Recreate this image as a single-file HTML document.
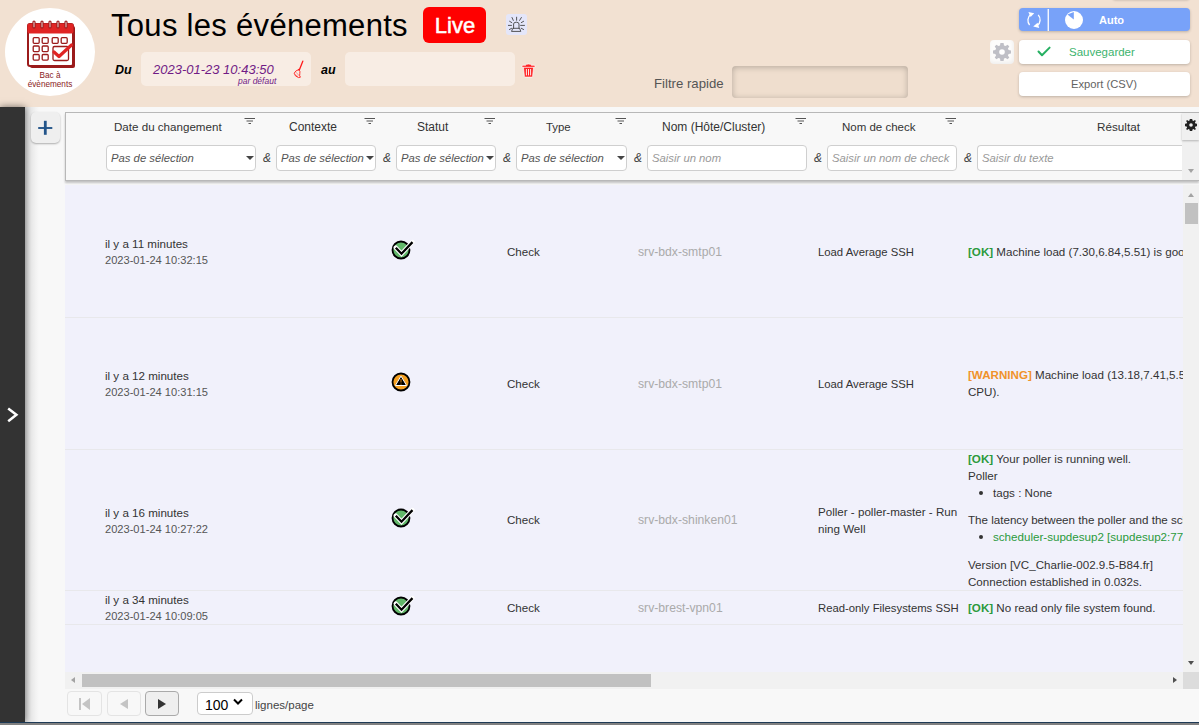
<!DOCTYPE html>
<html><head><meta charset="utf-8">
<style>
*{box-sizing:border-box;margin:0;padding:0}
html,body{width:1199px;height:725px;overflow:hidden;background:#f8f8f8;font-family:"Liberation Sans",sans-serif;position:relative}
.a{position:absolute;white-space:nowrap}
#hdr{left:0;top:0;width:1199px;height:107px;background:#f2e1d2}
#logo{left:5px;top:8px;width:90px;height:88px;border-radius:50%;background:#fff}
#title{left:111px;top:5.5px;font-size:31px;letter-spacing:0.3px;color:#000;line-height:40px}
#live{left:423px;top:7px;width:63px;height:36px;background:#f00;border-radius:6px;color:#fff;font-size:22px;line-height:36px;text-align:center;-webkit-text-stroke:0.5px #fff;padding-left:1px;padding-top:1px}
#siren{left:506px;top:14px;width:21px;height:21px;background:#e4e6fa;border-radius:3px}
.lbl{font-weight:bold;font-style:italic;font-size:12.5px;color:#000;line-height:16px}
.dinp{background:#f8ede4;border-radius:5px;height:34px;top:52px}
#qf{left:732px;top:66px;width:176px;height:32px;border-radius:4px;background:#efdece;box-shadow:inset 0 1px 6px rgba(0,0,0,.25)}
.btn{left:1019px;width:171px;height:24px;border-radius:4px;background:#fff;box-shadow:0 1px 3px rgba(0,0,0,.22)}
#sidebar{left:0;top:107px;width:25px;height:615px;background:#333;box-shadow:0 0 7px rgba(0,0,0,.55)}
#sbshadow{left:25px;top:107px;width:14px;height:615px;background:linear-gradient(to right,rgba(0,0,0,.1),rgba(0,0,0,0))}
#plus{left:31px;top:112px;width:29px;height:31px;background:#efefef;border-radius:5px;box-shadow:0 1px 2px rgba(0,0,0,.3)}
#thead{left:65px;top:112px;width:1134px;height:69px;background:#f8f8f8;border:1px solid #b8b8b8;border-right:none;box-shadow:0 2px 2px rgba(0,0,0,.22)}
#tbody{left:65px;top:185px;width:1118px;height:487px;background:#f1f1fb;overflow:hidden}
.th{font-size:12px;color:#333;line-height:16px;top:119px}
.sel{top:145px;height:26px;background:#fff;border:1px solid #cfcfcf;border-radius:4px;overflow:hidden}
.sel span{position:absolute;left:4px;top:4px;font-size:11.3px;font-style:italic;color:#555;line-height:16px;white-space:nowrap}
.sel span.ph{color:#999}
.amp{top:150px;font-size:12px;font-style:italic;color:#444;line-height:16px}
.tri{position:absolute;width:0;height:0;border-left:4px solid transparent;border-right:4px solid transparent;border-top:4px solid #444}
.sep{left:0;width:1118px;height:1px;background:#e8e8eb}
.t{font-size:11.6px;color:#333;line-height:16px}
.t2{font-size:11.1px;color:#555;line-height:16px}
.ok{color:#2b9a3c}
.warn{color:#f0932b}
.b{font-weight:bold}
</style></head><body>
<div id="hdr" class="a"></div>
<div id="logo" class="a"></div>
<svg class="a" style="left:0;top:0" width="100" height="100" viewBox="0 0 100 100">
<g stroke="#9b1b1b" fill="none" transform="translate(0.5,1.5)">
<rect x="29.5" y="24.5" width="45" height="42" rx="2" fill="#9b1b1b" stroke="none"/>
<rect x="27.5" y="22.5" width="45" height="42" rx="2" fill="#fff" stroke-width="2"/>
<rect x="27" y="22" width="46" height="10" rx="2" fill="#e02424" stroke="none"/>
<g fill="#fff" stroke-width="1.2">
<rect x="32.5" y="19.5" width="2" height="7" rx="1"/><rect x="40.5" y="19.5" width="2" height="7" rx="1"/><rect x="48.5" y="19.5" width="2" height="7" rx="1"/><rect x="56.5" y="19.5" width="2" height="7" rx="1"/><rect x="64.5" y="19.5" width="2" height="7" rx="1"/>
</g>
<g stroke-width="1.3">
<rect x="32.7" y="36.2" width="6" height="5.6" rx="1"/><rect x="41.7" y="36.2" width="6" height="5.6" rx="1"/><rect x="51.7" y="36.2" width="6" height="5.6" rx="1"/><rect x="60.7" y="36.2" width="6" height="5.6" rx="1"/>
<rect x="32.7" y="44.5" width="6" height="5.6" rx="1"/><rect x="41.7" y="44.5" width="6" height="5.6" rx="1"/>
<rect x="32.7" y="53" width="6" height="5.6" rx="1"/><rect x="41.7" y="53" width="6" height="5.6" rx="1"/>
<rect x="52.5" y="45" width="15.5" height="14" rx="1.5"/>
</g>
<path d="M53.5 50.5 L58.5 55 L71 43.5" stroke="#e02424" stroke-width="3.2" stroke-linecap="round" stroke-linejoin="round"/>
</g>
<text x="50" y="78" text-anchor="middle" font-family="Liberation Sans" font-size="8.2" fill="#8a1c1c">Bac à</text>
<text x="50" y="86.5" text-anchor="middle" font-family="Liberation Sans" font-size="8.2" fill="#8a1c1c">évènements</text>
</svg>
<div id="title" class="a">Tous les événements</div>
<div id="live" class="a">Live</div>
<div id="siren" class="a"></div>
<svg class="a" style="left:506px;top:14px" width="21" height="21" viewBox="506 14 21 21">
<g stroke="#3a3a3a" stroke-width="0.85" fill="none" stroke-linecap="round">
<path d="M516.6 17.2 V20.3 M512 17.5 L513.3 20.4 M521.4 17.5 L519.6 20.4 M509.6 21.3 L511.8 22.6 M523.6 21.3 L521.3 22.6 M508.4 25.4 H511.5 M520.6 25.4 H524.5 M509.4 29.5 L511.6 28.3 M523.6 29.5 L521.3 28.3"/>
<path d="M513.6 28.3 V24 Q513.6 22.2 516.3 22.2 Q519 22.2 519 24 V28.3"/>
<path d="M513.2 28.3 H519.6 L520.8 31.4 H511.9 Z" stroke-linejoin="round"/>
</g></svg>
<div class="a lbl" style="left:115px;top:62px">Du</div>
<div class="a dinp" style="left:141px;width:170px"></div>
<div class="a" style="left:153px;top:61.5px;font-size:13px;font-style:italic;color:#711b86;line-height:16px">2023-01-23 10:43:50</div>
<div class="a" style="left:238px;top:75.5px;font-size:8.5px;font-style:italic;color:#711b86;line-height:10px">par défaut</div>
<svg class="a" style="left:290px;top:58px" width="16" height="24" viewBox="290 58 16 24">
<g stroke="#ff1a1a" stroke-width="0.9" fill="none" stroke-linecap="round" stroke-linejoin="round">
<path d="M302.8 61.2 L299.3 70" stroke-width="1.3"/>
<path d="M298.6 69.6 Q295.2 70.6 294.2 73.2 Q294.6 76.4 298.6 77.6 L300.4 77.2 Q299.2 75.8 299.8 73.6 Q300.8 71.6 298.6 69.6 Z"/><path d="M296.4 72.6 L299 75.6 M295.6 74.8 L297.6 76.4" stroke-width="0.6" opacity="0.7"/>
</g></svg>
<svg class="a" style="left:520px;top:61px" width="18" height="19" viewBox="520 61 18 19">
<g fill="#f22" stroke="#fff" stroke-width="0.7">
<path d="M523.4 66.8 H533.6 L532.6 76.6 Q532.5 77.1 532 77.1 H525 Q524.5 77.1 524.4 76.6 Z"/>
<path d="M522 67.3 H535 V65.9 Q535 65.2 534 65.2 H531.4 Q531 64 528.5 64 Q526 64 525.6 65.2 H523 Q522 65.2 522 65.9 Z"/>
</g>
<g stroke="#fff" stroke-width="0.9"><path d="M526.4 69 V75.4 M528.5 69 V75.4 M530.6 69 V75.4"/></g>
</svg>
<div class="a lbl" style="left:321px;top:62px">au</div>
<div class="a dinp" style="left:345px;width:170px"></div>
<div class="a" style="left:654px;top:76px;font-size:13.2px;color:#555;line-height:16px">Filtre rapide</div>
<div id="qf" class="a"></div>
<div class="a" style="left:1112px;top:-10px;width:78px;height:10px;border-radius:4px;background:#f2e1d2;box-shadow:0 1px 2px rgba(0,0,0,.12)"></div>
<div class="a btn" style="top:8px;background:#78a2f9;height:23px"></div>
<svg class="a" style="left:1019px;top:8px" width="171" height="24" viewBox="1019 8 171 24">
<g stroke="#fff" fill="none" stroke-width="1.3">
<path d="M1029.6 25 A7.4 7.4 0 0 1 1030.6 14.6"/>
<path d="M1038.2 14.9 A7.4 7.4 0 0 1 1037.4 25.6"/>
</g>
<path d="M1028.4 12 L1034.2 13.2 L1030.6 17 Z" fill="#fff"/>
<path d="M1037.6 22.8 L1039.2 28 L1033.2 26.4 Z" fill="#fff"/>
<rect x="1047.6" y="9" width="1.3" height="22" fill="#fff"/>
<circle cx="1074" cy="20" r="9" fill="#fff"/>
<path d="M1073.8 19.4 L1073.8 12 L1067.4 14.6 Z" fill="#78a2f9"/>
</svg>
<div class="a" style="left:1099px;top:13px;font-size:11px;font-weight:bold;color:#fff;line-height:14px">Auto</div>
<div class="a btn" style="top:40px"></div>
<svg class="a" style="left:1035px;top:44px" width="18" height="16" viewBox="1035 44 18 16">
<path d="M1038.5 51.5 L1042 55.3 L1049.6 47.6" stroke="#26b062" stroke-width="2" fill="none" stroke-linecap="round" stroke-linejoin="round"/>
</svg>
<div class="a" style="left:1069px;top:45px;font-size:11.5px;color:#3db36e;line-height:14px">Sauvegarder</div>
<div class="a btn" style="top:72px"></div>
<div class="a" style="left:1071px;top:77px;font-size:11.2px;color:#626262;line-height:14px">Export (CSV)</div>
<div class="a" style="left:990px;top:40px;width:24px;height:24px;border-radius:4px;background:#fdfcfb;box-shadow:inset -1px -2px 4px rgba(0,0,0,.06)"></div>
<svg class="a" style="left:990px;top:40px" width="24" height="24" viewBox="-12 -12 24 24">
<g fill="#bfbfc6">
<path d="M-1.6 -9 H1.6 L2 -6.6 L3.6 -5.9 L5.6 -7.3 L7.3 -5.6 L5.9 -3.6 L6.6 -2 L9 -1.6 V1.6 L6.6 2 L5.9 3.6 L7.3 5.6 L5.6 7.3 L3.6 5.9 L2 6.6 L1.6 9 H-1.6 L-2 6.6 L-3.6 5.9 L-5.6 7.3 L-7.3 5.6 L-5.9 3.6 L-6.6 2 L-9 1.6 V-1.6 L-6.6 -2 L-5.9 -3.6 L-7.3 -5.6 L-5.6 -7.3 L-3.6 -5.9 L-2 -6.6 Z"/>
</g>
<circle r="2.8" fill="#fff"/>
</svg>

<div id="sidebar" class="a"></div>
<div id="sbshadow" class="a"></div>
<div id="plus" class="a"></div>
<svg class="a" style="left:31px;top:112px" width="29" height="31" viewBox="31 112 29 31">
<path d="M45.3 120.8 V134.8" stroke="#23558a" stroke-width="2.8" fill="none"/><path d="M38.2 128 H52.3" stroke="#23558a" stroke-width="1.9" fill="none"/>
</svg>
<svg class="a" style="left:0;top:400px" width="25" height="30" viewBox="0 400 25 30">
<path d="M8.2 408.4 L16.4 414.8 L8.2 421.2" stroke="#fff" stroke-width="2.5" fill="none"/>
</svg>
<div id="thead" class="a"></div>
<div class="a th" style="left:114px;font-size:11.6px">Date du changement</div>
<div class="a th" style="left:289px">Contexte</div>
<div class="a th" style="left:417px">Statut</div>
<div class="a th" style="left:546px;font-size:11.4px">Type</div>
<div class="a th" style="left:662px">Nom (Hôte/Cluster)</div>
<div class="a th" style="left:842px;font-size:11.5px">Nom de check</div>
<div class="a th" style="left:1097px;font-size:11.7px">Résultat</div>

<div class="a sel" style="left:106px;width:150px"><span>Pas de sélection</span><i class="tri" style="left:139px;top:10px"></i></div>
<div class="a amp" style="left:263px">&amp;</div>
<div class="a sel" style="left:276px;width:100px"><span>Pas de sélection</span><i class="tri" style="left:89px;top:10px"></i></div>
<div class="a amp" style="left:383px">&amp;</div>
<div class="a sel" style="left:396px;width:100px"><span>Pas de sélection</span><i class="tri" style="left:89px;top:10px"></i></div>
<div class="a amp" style="left:503px">&amp;</div>
<div class="a sel" style="left:516px;width:111px"><span>Pas de sélection</span><i class="tri" style="left:100px;top:10px"></i></div>
<div class="a amp" style="left:634px">&amp;</div>
<div class="a sel" style="left:647px;width:160px"><span class="ph">Saisir un nom</span></div>
<div class="a amp" style="left:814px">&amp;</div>
<div class="a sel" style="left:827px;width:130px"><span class="ph">Saisir un nom de check</span></div>
<div class="a amp" style="left:964px">&amp;</div>
<div class="a sel" style="left:977px;width:220px;border-right:none;border-radius:4px 0 0 4px"><span class="ph">Saisir du texte</span></div>
<div class="a" style="left:1182px;top:113px;width:17px;height:67px;background:#f0f0f0"></div>
<svg class="a" style="left:244px;top:117px" width="12" height="8" viewBox="0 0 12 8"><path d="M0.5 1.5 H11 M2.5 4 H9 M4.5 6.5 H7" stroke="#555" stroke-width="1" fill="none"/></svg>
<svg class="a" style="left:364px;top:117px" width="12" height="8" viewBox="0 0 12 8"><path d="M0.5 1.5 H11 M2.5 4 H9 M4.5 6.5 H7" stroke="#555" stroke-width="1" fill="none"/></svg>
<svg class="a" style="left:484px;top:117px" width="12" height="8" viewBox="0 0 12 8"><path d="M0.5 1.5 H11 M2.5 4 H9 M4.5 6.5 H7" stroke="#555" stroke-width="1" fill="none"/></svg>
<svg class="a" style="left:615px;top:117px" width="12" height="8" viewBox="0 0 12 8"><path d="M0.5 1.5 H11 M2.5 4 H9 M4.5 6.5 H7" stroke="#555" stroke-width="1" fill="none"/></svg>
<svg class="a" style="left:795px;top:117px" width="12" height="8" viewBox="0 0 12 8"><path d="M0.5 1.5 H11 M2.5 4 H9 M4.5 6.5 H7" stroke="#555" stroke-width="1" fill="none"/></svg>
<svg class="a" style="left:945px;top:117px" width="12" height="8" viewBox="0 0 12 8"><path d="M0.5 1.5 H11 M2.5 4 H9 M4.5 6.5 H7" stroke="#555" stroke-width="1" fill="none"/></svg>
<div class="a" style="left:1182px;top:113px;width:17px;height:27px;background:#f0f0f0;box-shadow:0 1px 2px rgba(0,0,0,.25)"></div>
<svg class="a" style="left:1183px;top:117px" width="16" height="16" viewBox="-8 -8 16 16">
<path d="M-1.2 -6 H1.2 L1.5 -4.4 L2.5 -3.9 L3.9 -4.9 L4.9 -3.9 L3.9 -2.5 L4.4 -1.5 L6 -1.2 V1.2 L4.4 1.5 L3.9 2.5 L4.9 3.9 L3.9 4.9 L2.5 3.9 L1.5 4.4 L1.2 6 H-1.2 L-1.5 4.4 L-2.5 3.9 L-3.9 4.9 L-4.9 3.9 L-3.9 2.5 L-4.4 1.5 L-6 1.2 V-1.2 L-4.4 -1.5 L-3.9 -2.5 L-4.9 -3.9 L-3.9 -4.9 L-2.5 -3.9 L-1.5 -4.4 Z" fill="#222"/>
<circle r="1.8" fill="#f0f0f0"/>
</svg>
<div class="a tri" style="left:1188px;top:169px;border-top-color:#a3a3a3;border-left-width:3.5px;border-right-width:3.5px"></div>

<div id="tbody" class="a">
  <div class="a sep" style="top:132px"></div>
  <div class="a sep" style="top:264px"></div>
  <div class="a sep" style="top:405px"></div>
  <div class="a sep" style="top:439px"></div>
</div>
<div class="a" style="left:1183px;top:185px;width:16px;height:487px;background:#f1f1f1"></div>
<div class="a" style="left:1185px;top:203px;width:13px;height:21px;background:#c1c1c1"></div>
<div class="a" style="left:65px;top:672px;width:1118px;height:17px;background:#f1f1f1"></div>
<div class="a" style="left:82px;top:674px;width:569px;height:13px;background:#c1c1c1"></div>
<div class="a" style="left:1188px;top:193px;width:0;height:0;border-left:3.5px solid transparent;border-right:3.5px solid transparent;border-bottom:4px solid #a3a3a3"></div>
<div class="a" style="left:1188px;top:661px;width:0;height:0;border-left:3.6px solid transparent;border-right:3.6px solid transparent;border-top:4px solid #505050"></div>
<div class="a" style="left:71px;top:677px;width:0;height:0;border-top:3.7px solid transparent;border-bottom:3.7px solid transparent;border-right:4.2px solid #a3a3a3"></div>
<div class="a" style="left:1173px;top:677px;width:0;height:0;border-top:3.7px solid transparent;border-bottom:3.7px solid transparent;border-left:4.2px solid #505050"></div>
<div class="a" style="left:1183px;top:672px;width:16px;height:17px;background:#dcdcdc"></div>

<!-- rows text -->
<svg class="a" style="left:388px;top:237.5px" width="28" height="24" viewBox="388 237.5 28 24">
<circle cx="401" cy="249.5" r="8.5" fill="#62b86a" stroke="#000" stroke-width="1.8"/>
<path d="M395.8 247.2 L401.5 253.2 L412.5 241.6" stroke="#fff" stroke-width="4.4" fill="none" stroke-linecap="round" stroke-linejoin="miter"/>
<path d="M395.8 247.2 L401.5 253.2 L412.5 241.6" stroke="#000" stroke-width="2.3" fill="none" stroke-linecap="butt" stroke-linejoin="miter"/>
</svg><svg class="a" style="left:388px;top:369.5px" width="28" height="24" viewBox="388 369.5 28 24">
<circle cx="401" cy="381.5" r="8.5" fill="#f5a020" stroke="#000" stroke-width="1.8"/>
<path d="M401 375.6 L406.6 385 H395.4 Z" fill="#000" stroke="#fff" stroke-width="1" stroke-linejoin="round"/>
<path d="M401 378.5 V382.1" stroke="#b87010" stroke-width="1.2"/>
<rect x="400.4" y="383.1" width="1.2" height="1" fill="#b87010"/>
</svg><svg class="a" style="left:388px;top:505.5px" width="28" height="24" viewBox="388 505.5 28 24">
<circle cx="401" cy="517.5" r="8.5" fill="#62b86a" stroke="#000" stroke-width="1.8"/>
<path d="M395.8 515.2 L401.5 521.2 L412.5 509.6" stroke="#fff" stroke-width="4.4" fill="none" stroke-linecap="round" stroke-linejoin="miter"/>
<path d="M395.8 515.2 L401.5 521.2 L412.5 509.6" stroke="#000" stroke-width="2.3" fill="none" stroke-linecap="butt" stroke-linejoin="miter"/>
</svg><svg class="a" style="left:388px;top:593.5px" width="28" height="24" viewBox="388 593.5 28 24">
<circle cx="401" cy="605.5" r="8.5" fill="#62b86a" stroke="#000" stroke-width="1.8"/>
<path d="M395.8 603.2 L401.5 609.2 L412.5 597.6" stroke="#fff" stroke-width="4.4" fill="none" stroke-linecap="round" stroke-linejoin="miter"/>
<path d="M395.8 603.2 L401.5 609.2 L412.5 597.6" stroke="#000" stroke-width="2.3" fill="none" stroke-linecap="butt" stroke-linejoin="miter"/>
</svg>
<div class="a" style="left:0;top:0;width:1183px;height:672px;overflow:hidden">
<div class="a t" style="left:105px;top:236px">il y a 11 minutes</div>
<div class="a t2" style="left:105px;top:252px">2023-01-24 10:32:15</div>
<div class="a t" style="left:507px;top:244px">Check</div>
<div class="a t" style="left:638px;top:244px;color:#aaa;font-size:12.2px">srv-bdx-smtp01</div>
<div class="a t" style="left:818px;top:244px;font-size:11.3px">Load Average SSH</div>
<div class="a t" style="left:968px;top:244px"><span class="ok b">[OK]</span> Machine load (7.30,6.84,5.51) is good</div>

<div class="a t" style="left:105px;top:368px">il y a 12 minutes</div>
<div class="a t2" style="left:105px;top:384px">2023-01-24 10:31:15</div>
<div class="a t" style="left:507px;top:376px">Check</div>
<div class="a t" style="left:638px;top:376px;color:#aaa;font-size:12.2px">srv-bdx-smtp01</div>
<div class="a t" style="left:818px;top:376px;font-size:11.3px">Load Average SSH</div>
<div class="a t" style="left:968px;top:366px;line-height:17px"><span class="warn b">[WARNING]</span> Machine load (13.18,7.41,5.51) is high (&gt; 2 per<br>CPU).</div>

<div class="a t" style="left:105px;top:505px">il y a 16 minutes</div>
<div class="a t2" style="left:105px;top:521px">2023-01-24 10:27:22</div>
<div class="a t" style="left:507px;top:512px">Check</div>
<div class="a t" style="left:638px;top:512px;color:#aaa;font-size:12.2px">srv-bdx-shinken01</div>
<div class="a t" style="left:818px;top:503px;line-height:17px">Poller - poller-master - Run<br>ning Well</div>
<div class="a t" style="left:968px;top:450px;line-height:17px"><span class="ok b">[OK]</span> Your poller is running well.<br>Poller</div>
<div class="a" style="left:979px;top:491px;width:4px;height:4px;border-radius:50%;background:#333"></div>
<div class="a t" style="left:993px;top:484px;line-height:17px">tags : None</div>
<div class="a t" style="left:968px;top:511px;line-height:17px">The latency between the poller and the scheduler</div>
<div class="a" style="left:979px;top:535px;width:4px;height:4px;border-radius:50%;background:#333"></div>
<div class="a t ok" style="left:993px;top:528px;line-height:17px">scheduler-supdesup2 [supdesup2:7768]</div>
<div class="a t" style="left:968px;top:556px;line-height:17px">Version [VC_Charlie-002.9.5-B84.fr]<br>Connection established in 0.032s.</div>

<div class="a t" style="left:105px;top:592px">il y a 34 minutes</div>
<div class="a t2" style="left:105px;top:608px">2023-01-24 10:09:05</div>
<div class="a t" style="left:507px;top:600px">Check</div>
<div class="a t" style="left:638px;top:600px;color:#aaa;font-size:12.2px">srv-brest-vpn01</div>
<div class="a t" style="left:818px;top:600px;font-size:11.3px">Read-only Filesystems SSH</div>
<div class="a t" style="left:968px;top:600px"><span class="ok b">[OK]</span> No read only file system found.</div>

</div>
<!-- pagination -->
<div class="a" style="left:67px;top:691px;width:35px;height:25px;border:1px solid #e4e4e4;border-radius:4px"></div>
<div class="a" style="left:107px;top:691px;width:34px;height:25px;border:1px solid #e4e4e4;border-radius:4px"></div>
<div class="a" style="left:145px;top:691px;width:34px;height:25px;border:1px solid #aaa;border-radius:4px;background:#efefef"></div>
<div class="a" style="left:197px;top:692px;width:56px;height:23px;border:1px solid #ccc;border-radius:4px;background:#fff"></div>
<div class="a" style="left:79px;top:698px;width:2px;height:12px;background:#c4c4c4"></div>
<div class="a" style="left:82px;top:698px;width:0;height:0;border-top:6px solid transparent;border-bottom:6px solid transparent;border-right:8px solid #c4c4c4"></div>
<div class="a" style="left:120px;top:699px;width:0;height:0;border-top:5px solid transparent;border-bottom:5px solid transparent;border-right:8px solid #c4c4c4"></div>
<div class="a" style="left:158px;top:699px;width:0;height:0;border-top:5px solid transparent;border-bottom:5px solid transparent;border-left:8px solid #333"></div>
<svg class="a" style="left:232px;top:697px" width="12" height="10" viewBox="0 0 12 10"><path d="M2 2.5 L6 6.5 L10 2.5" stroke="#000" stroke-width="2" fill="none"/></svg>
<div class="a" style="left:205px;top:696px;font-size:14px;color:#000;line-height:18px">100</div>
<div class="a" style="left:255px;top:697px;font-size:11.5px;color:#444;line-height:16px">lignes/page</div>
<div class="a" style="left:0;top:722px;width:1199px;height:1px;background:#1e3a56"></div>
<div class="a" style="left:0;top:723px;width:1199px;height:2px;background:#808080"></div>
</body></html>
